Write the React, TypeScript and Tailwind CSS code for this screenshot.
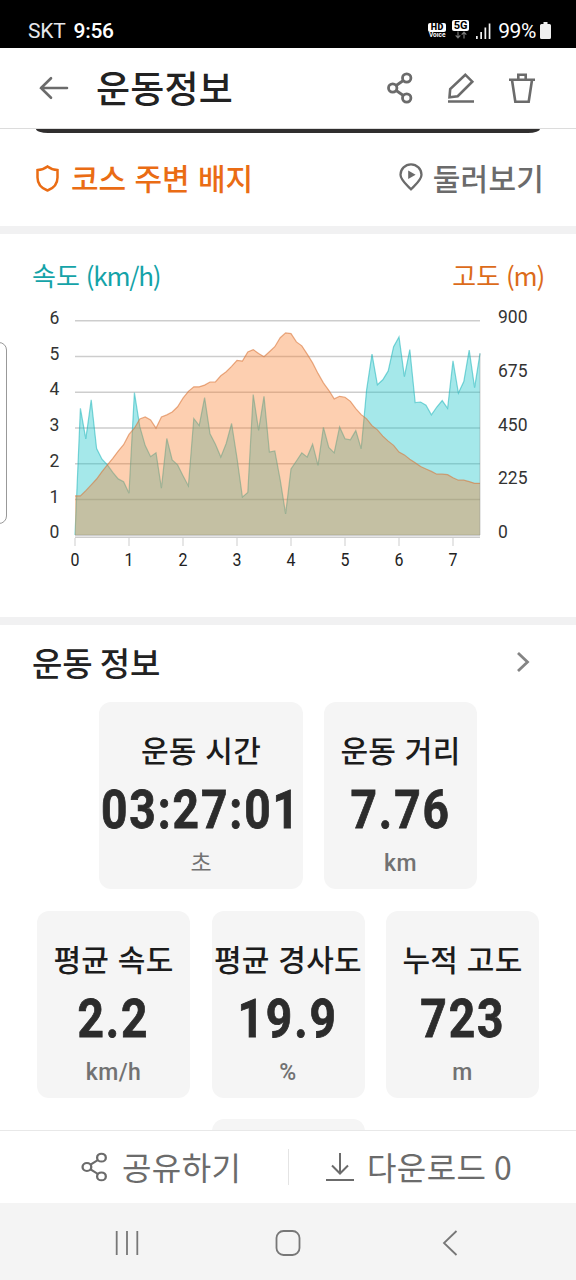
const KR = "font-['Noto_Sans_CJK_KR',sans-serif]";
const ROBOTO = "font-['Roboto',sans-serif]";

// One sample every 0.1 km
const speed = [
	0, 3.54, 2.69, 3.78, 2.42, 2.12, 1.96, 1.75, 1.57, 1.49, 1.17, 3.98, 3.03,
	2.5, 2.19, 2.3, 1.31, 2.7, 2.1, 1.96, 1.66, 1.37, 3.26, 3.06, 3.84, 2.83,
	2.54, 2.18, 2.56, 3.12, 2.15, 1.06, 1.19, 3.93, 2.93, 3.88, 2.32, 2.35,
	1.54, 0.59, 1.85, 2.07, 2.3, 2.18, 2.54, 1.95, 3.01, 2.45, 2.3, 3.02, 2.69,
	2.66, 2.92, 2.41, 4.06, 5.06, 4.2, 4.34, 4.59, 5.27, 5.54, 4.43, 5.19, 3.7,
	3.72, 3.63, 3.36, 3.58, 3.76, 3.54, 4.87, 3.97, 4.29, 5.17, 4.12, 5.08,
];

const altitude = [
	164, 164, 186, 210, 235, 266, 294, 322, 352, 379, 422, 448, 487, 495, 483,
	448, 495, 504, 516, 538, 574, 603, 622, 622, 629, 642, 642, 668, 685, 708,
	733, 730, 768, 778, 762, 748, 769, 790, 828, 848, 845, 810, 794, 759, 722,
	678, 638, 607, 571, 582, 578, 561, 530, 505, 487, 459, 441, 415, 394, 376,
	348, 336, 318, 303, 287, 277, 267, 255, 255, 253, 240, 230, 230, 224, 217,
	217,
];

const LEFT = 75;
const BASE = 235;
const PLOT_HEIGHT = 214.5;

const toPoints = (values: number[], max: number) =>
	values
		.map((v, i) => `${(LEFT + i * 5.4).toFixed(1)},${(BASE - (v / max) * PLOT_HEIGHT).toFixed(1)}`)
		.join(" ");

const closed = (points: string) => `${LEFT},${BASE} ${points} 480,${BASE}`;

function ShareIcon({ className, stroke }: { className: string; stroke: number }) {
	return (
		<svg
			viewBox="0 0 26 32"
			preserveAspectRatio="none"
			className={className}
			fill="none"
			stroke="currentColor"
			strokeWidth={stroke}
		>
			<circle cx="5.7" cy="16" r="4.2" />
			<circle cx="19.7" cy="6" r="4.2" />
			<circle cx="19.7" cy="26" r="4.2" />
			<path d="M9.2 13.5 16.3 8.5M9.2 18.5l7.1 5" />
		</svg>
	);
}

function StatusBar() {
	return (
		<div className={`flex h-12 shrink-0 items-center bg-black pt-[13px] pr-[25px] pl-7 text-white ${ROBOTO}`}>
			<span className="text-[21px] leading-6 tracking-[-0.2px] text-gray-200">SKT</span>
			<span className="ml-2 text-[21px] leading-6 font-medium tracking-[-0.3px]">9:56</span>
			<div className="ml-auto flex items-center">
				<div className="flex w-[18px] flex-col items-center">
					<span className="flex h-[9px] w-[18px] items-center justify-center rounded-[2px] bg-white text-[9px] leading-[9px] font-black tracking-[0.4px] text-black">
						HD
					</span>
					<span className="text-[6.5px] leading-[7px] font-bold">Voice</span>
				</div>
				<div className="-mt-0.5 ml-1.5 flex w-[17px] flex-col items-center">
					<span className="flex h-[11px] w-[17px] items-center justify-center rounded-[2px] bg-white text-[11px] leading-[11px] font-bold text-black">
						5G
					</span>
					<svg viewBox="0 0 12 8" className="h-2 w-3" fill="none" stroke="#777" strokeWidth="1.2">
						<path d="M3 .5v6M.7 4.3 3 6.8l2.3-2.5M9 7.5v-6M6.7 3.7 9 1.2l2.3 2.5" />
					</svg>
				</div>
				<svg viewBox="0 0 15 16" className="ml-[7px] h-4 w-[15px]" fill="#f3f3f3">
					<path d="M0 13h1.7v3H0zM4.3 9h1.7v7H4.3zM8.5 4.5h1.7V16H8.5zM12.7 0.5h1.7V16H12.7z" />
				</svg>
				<span className="ml-[7px] text-[21px] leading-6 tracking-[-0.4px]">99%</span>
				<svg viewBox="0 0 11 17" className="ml-1 h-[17px] w-[11px]" fill="#efefef">
					<path d="M3.5 0h4v2H9.5a1.5 1.5 0 0 1 1.5 1.5V15.5a1.5 1.5 0 0 1-1.5 1.5h-8A1.5 1.5 0 0 1 0 15.5V3.5A1.5 1.5 0 0 1 1.5 2h2z" />
				</svg>
			</div>
		</div>
	);
}

function Header() {
	return (
		<header className="flex h-[81px] shrink-0 items-center border-b-[1.5px] border-[#dcdcdc] pr-10 pl-[39px] text-[#6b6b6b]">
			<svg viewBox="0 0 30 24" className="h-6 w-[30px]" fill="none" stroke="currentColor" strokeWidth="2.6" strokeLinecap="round">
				<path d="M2 12h26M12 2.2 2 12l10 9.8" />
			</svg>
			<h1 className="mb-[2px] ml-[27px] text-[37px] leading-[54px] font-medium tracking-[0.2px] whitespace-nowrap text-[#222]">
				운동정보
			</h1>
			<ShareIcon className="ml-auto h-8 w-[26px]" stroke={2.8} />
			<svg viewBox="0 0 28 32" className="ml-[34px] h-8 w-7" fill="none" stroke="currentColor" strokeWidth="2.6">
				<path d="M1 29.5h26M2.5 25.2 3.2 17 18.3 2.7l7 7L10.7 24.2z" />
			</svg>
			<svg viewBox="0 0 28 32" className="ml-[33px] h-8 w-7" fill="none" stroke="currentColor" strokeWidth="2.6">
				<path d="M1 7.7h26M4 8l3.3 21.7h13.4L24 8M10.3 7V2.7h7.4V7" />
			</svg>
		</header>
	);
}

function BadgeRow() {
	return (
		<section className="flex h-[93px] shrink-0 items-center pr-8 pb-[5px] pl-9">
			<svg viewBox="0 0 23 27" className="mt-0.5 h-[27px] w-[23px]" fill="none" stroke="#ea6c14" strokeWidth="2.5">
				<path d="M11.5 1.5C8.800 3.6 5.2 4.9 1.5 5.1V12.5c0 6.2 4 10.8 10 13 6-2.2 10-6.8 10-13V5.1C17.8 4.9 14.2 3.6 11.5 1.5z" />
			</svg>
			<span className="ml-3 text-[30px] leading-10 font-medium [word-spacing:1.5px] whitespace-nowrap text-[#ea6c14]">
				코스 주변 배지
			</span>
			<svg viewBox="0 0 24 28" className="ml-auto h-7 w-6" fill="none" stroke="#6b6b6b" strokeWidth="2.3">
				<path d="M12 26.3C7.5 21.5 1.5 17 1.5 11.7a10.5 10.4 0 0 1 21 0C22.5 17 16.5 21.5 12 26.3z" />
				<path d="M9.2 7.5v8.6l7.4-4.3z" fill="#6b6b6b" stroke="none" />
			</svg>
			<span className="ml-[10px] text-[30px] leading-10 font-medium tracking-[0.2px] whitespace-nowrap text-[#6b6b6b]">
				둘러보기
			</span>
		</section>
	);
}

function ElevationChart() {
	const speedPoints = toPoints(speed, 6);
	const altitudePoints = toPoints(altitude, 900);

	return (
		<section className="h-[383px] shrink-0 pt-[21px]">
			<div className="flex h-[45px] items-start justify-between px-8 text-[26px] leading-10">
				<span className="text-[#14a3a8]">
					속도 <span className="tracking-[-1.2px]">(km/h)</span>
				</span>
				<span className="text-[#dc6b1a]">
					고도 <span className="tracking-[-1.2px]">(m)</span>
				</span>
			</div>
			<svg viewBox="0 0 576 280" className={`h-[280px] w-full ${ROBOTO}`}>
				<g stroke="#cdcdcd" strokeWidth="1.5">
					{[0, 1, 2, 3, 4, 5, 6].map((n) => (
						<path key={n} d={`M75 ${BASE + 0.3 - n * 35.75}H480`} />
					))}
					<path d="M75 237.3H480" />
				</g>
				<polygon points={closed(speedPoints)} fill="#1ec6cb" fillOpacity="0.4" />
				<polyline points={speedPoints} fill="none" stroke="#1eb4b9" strokeOpacity="0.55" strokeWidth="1.2" />
				<polygon points={closed(altitudePoints)} fill="#fa7d2a" fillOpacity="0.37" />
				<polyline points={altitudePoints} fill="none" stroke="#d8763a" strokeOpacity="0.6" strokeWidth="1.2" />
				<path d="M480 53.3V235" stroke="#888" strokeOpacity="0.4" />
				<g fill="#333" fontSize="17.5">
					{[0, 1, 2, 3, 4, 5, 6].map((n) => (
						<text key={n} x="54.3" y={238.3 - n * 35.75} textAnchor="middle">
							{n}
						</text>
					))}
					{[0, 225, 450, 675, 900].map((n, i) => (
						<text key={n} x="498" y={237.8 - i * 53.65}>
							{n}
						</text>
					))}
				</g>
				{[0, 1, 2, 3, 4, 5, 6, 7].map((n) => (
					<g key={n} transform={`translate(${LEFT + n * 54} 0)`}>
						<path d="M0 238v8" stroke="#cdcdcd" />
						<text transform="scale(.84 1)" y="265.7" fontSize="19" textAnchor="middle" fill="#222">
							{n}
						</text>
					</g>
				))}
			</svg>
		</section>
	);
}

interface StatProps {
	label: string;
	value: string;
	unit: string;
	wide?: boolean;
}

function StatCard({ label, value, unit, wide }: StatProps) {
	return (
		<div
			className={`flex h-[187px] shrink-0 flex-col items-center rounded-xl bg-[#f5f5f5] whitespace-nowrap ${wide ? "w-[204px]" : "w-[153px]"}`}
		>
			<span className="mt-[27px] text-[30px] leading-10 font-medium tracking-[0.3px] [word-spacing:1.5px] text-[#1c1c1c]">
				{label}
			</span>
			<span
				className={`mt-3 scale-x-[.87] text-[53px] leading-[58px] font-bold tracking-[2.2px] text-[#2c2c2c] [-webkit-text-stroke:0.8px_#2c2c2c] ${ROBOTO}`}
			>
				{value}
			</span>
			<span
				className={`mt-[10px] text-[23px] leading-[30px] text-[#727272] font-['Roboto','Noto_Sans_CJK_KR',sans-serif] ${unit === "초" ? "font-normal" : "font-medium tracking-[0.4px]"}`}
			>
				{unit}
			</span>
		</div>
	);
}

function WorkoutInfo() {
	return (
		<section className="h-[505px] shrink-0 overflow-hidden">
			<div className="flex h-[77px] items-center justify-between pr-[46px] pb-1 pl-8">
				<h2 className="text-[33px] leading-[50px] font-medium tracking-[-0.1px] text-[#222]">운동 정보</h2>
				<svg viewBox="0 0 14 22" className="h-[22px] w-3.5" fill="none" stroke="#848484" strokeWidth="2.8">
					<path d="M2 2l9.5 9L2 20" />
				</svg>
			</div>
			<div className="flex flex-col items-center gap-[21.5px]">
				<div className="flex gap-[21px]">
					<StatCard label="운동 시간" value="03:27:01" unit="초" wide />
					<StatCard label="운동 거리" value="7.76" unit="km" />
				</div>
				<div className="flex gap-[21.5px]">
					<StatCard label="평균 속도" value="2.2" unit="km/h" />
					<StatCard label="평균 경사도" value="19.9" unit="%" />
					<StatCard label="누적 고도" value="723" unit="m" />
				</div>
				<div className="h-[187px] w-[153px] rounded-xl bg-[#f5f5f5]" />
			</div>
		</section>
	);
}

function ActionBar() {
	return (
		<div className="flex h-[73px] shrink-0 items-center border-t border-[#e8e8e8] bg-white text-[32px] leading-[48px] tracking-[0.4px] whitespace-nowrap text-[#6b6b6b]">
			<div className="flex w-[288px] items-center pl-[81px]">
				<ShareIcon className="h-[30px] w-[27px]" stroke={2.2} />
				<span className="mb-0.5 ml-[14px]">공유하기</span>
			</div>
			<div className="h-9 w-px bg-[#e4e4e4]" />
			<div className="flex items-center pl-[37px]">
				<svg viewBox="0 0 28 30" className="h-[30px] w-7" fill="none" stroke="currentColor" strokeWidth="2">
					<path d="M0 28h28M14 1v20M6 13.5l8 8 8-8" />
				</svg>
				<span className="mb-0.5 ml-[13px]">다운로드 0</span>
			</div>
		</div>
	);
}

function NavigationBar() {
	return (
		<nav className="flex h-[77px] shrink-0 items-center bg-[#f4f4f4] pt-[3px] pl-[115px]">
			<svg viewBox="0 0 24 26" className="h-[26px] w-6" fill="none" stroke="#777" strokeWidth="1.8">
				<path d="M1.7 1v24M12 1v24M22.3 1v24" />
			</svg>
			<svg viewBox="0 0 26 26" className="ml-[136px] h-[26px] w-[26px]" fill="none" stroke="#777" strokeWidth="1.8">
				<rect x="1.5" y="1" width="23" height="24" rx="7" />
			</svg>
			<svg viewBox="0 0 16 26" className="ml-[141px] h-[26px] w-4" fill="none" stroke="#777" strokeWidth="1.8">
				<path d="M14.5 1 2 13l12.5 12" />
			</svg>
		</nav>
	);
}

export default function App() {
	return (
		<div className={`relative flex h-[1280px] w-[576px] flex-col overflow-hidden bg-white ${KR}`}>
			<StatusBar />
			<Header />
			{/* Bottom edge of the map card scrolled under the header */}
			<div className="mx-9 h-1 shrink-0 rounded-b-[12px_4px] bg-[#302e2e]" />
			<BadgeRow />
			<div className="h-2 shrink-0 bg-[#f1f1f2]" />
			<ElevationChart />
			<div className="h-2 shrink-0 bg-[#f1f1f2]" />
			<WorkoutInfo />
			<ActionBar />
			<NavigationBar />
			{/* Edge panel handle */}
			<div className="absolute top-[342px] -left-3 h-[182px] w-[19px] rounded-lg border-[1.5px] border-[#999] bg-white" />
		</div>
	);
}
